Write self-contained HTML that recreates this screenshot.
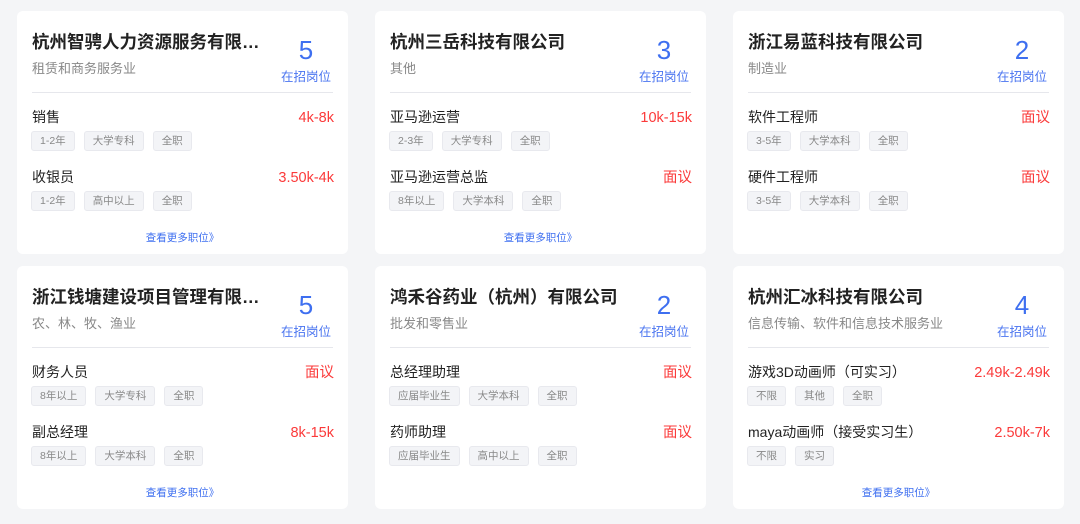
<!DOCTYPE html>
<html><head><meta charset="utf-8"><style>
*{margin:0;padding:0;box-sizing:border-box}
body{width:1080px;height:524px;background:#f4f5f7;font-family:"Liberation Sans","Noto Sans CJK SC",sans-serif;position:relative;overflow:hidden}
.c{position:absolute;width:331px;height:243px;background:#fff;border-radius:6px}
.t{position:absolute;left:15px;top:19px;width:243px;font-size:17.5px;font-weight:bold;color:#222;white-space:nowrap;overflow:hidden;text-overflow:ellipsis;line-height:24px}
.s{position:absolute;left:15px;top:49px;font-size:13px;color:#888;line-height:18px}
.n{position:absolute;right:7px;top:23px;width:70px;text-align:center;font-size:26px;color:#3e6ff0;line-height:32px}
.l{position:absolute;right:7px;top:57px;width:70px;text-align:center;font-size:12.5px;color:#4a74f0;line-height:18px}
.d{position:absolute;left:15px;right:15px;top:81px;border-top:1px solid #e6e7ec}
.j{position:absolute;left:15px;right:14px;font-size:14px;color:#222;line-height:20px}
.j b{position:absolute;right:0;top:1px;font-weight:normal;font-size:14.5px;line-height:20px;color:#fb3a3a}
.g{position:absolute;left:14px;display:flex;gap:9px}
.g span{height:20px;padding:0 8px;line-height:19px;font-size:10.5px;color:#888;background:#f3f4f7;border:1px solid #e8e9ee;border-radius:3px}
.m{position:absolute;left:0;right:0;top:220px;text-align:center;font-size:10.5px;color:#3e6ff0;line-height:14px}
</style></head><body>

<div class="c" style="left:17px;top:11px">
<div class="t">杭州智骋人力资源服务有限公司</div><div class="s">租赁和商务服务业</div>
<div class="n">5</div><div class="l">在招岗位</div><div class="d"></div>
<div class="j" style="top:96px">销售<b>4k-8k</b></div>
<div class="g" style="top:120px"><span>1-2年</span><span>大学专科</span><span>全职</span></div>
<div class="j" style="top:156px">收银员<b>3.50k-4k</b></div>
<div class="g" style="top:180px"><span>1-2年</span><span>高中以上</span><span>全职</span></div>
<div class="m">查看更多职位》</div></div>

<div class="c" style="left:375px;top:11px">
<div class="t">杭州三岳科技有限公司</div><div class="s">其他</div>
<div class="n">3</div><div class="l">在招岗位</div><div class="d"></div>
<div class="j" style="top:96px">亚马逊运营<b>10k-15k</b></div>
<div class="g" style="top:120px"><span>2-3年</span><span>大学专科</span><span>全职</span></div>
<div class="j" style="top:156px">亚马逊运营总监<b>面议</b></div>
<div class="g" style="top:180px"><span>8年以上</span><span>大学本科</span><span>全职</span></div>
<div class="m">查看更多职位》</div></div>

<div class="c" style="left:733px;top:11px">
<div class="t">浙江易蓝科技有限公司</div><div class="s">制造业</div>
<div class="n">2</div><div class="l">在招岗位</div><div class="d"></div>
<div class="j" style="top:96px">软件工程师<b>面议</b></div>
<div class="g" style="top:120px"><span>3-5年</span><span>大学本科</span><span>全职</span></div>
<div class="j" style="top:156px">硬件工程师<b>面议</b></div>
<div class="g" style="top:180px"><span>3-5年</span><span>大学本科</span><span>全职</span></div>
</div>

<div class="c" style="left:17px;top:266px">
<div class="t">浙江钱塘建设项目管理有限公司</div><div class="s">农、林、牧、渔业</div>
<div class="n">5</div><div class="l">在招岗位</div><div class="d"></div>
<div class="j" style="top:96px">财务人员<b>面议</b></div>
<div class="g" style="top:120px"><span>8年以上</span><span>大学专科</span><span>全职</span></div>
<div class="j" style="top:156px">副总经理<b>8k-15k</b></div>
<div class="g" style="top:180px"><span>8年以上</span><span>大学本科</span><span>全职</span></div>
<div class="m">查看更多职位》</div></div>

<div class="c" style="left:375px;top:266px">
<div class="t">鸿禾谷药业（杭州）有限公司</div><div class="s">批发和零售业</div>
<div class="n">2</div><div class="l">在招岗位</div><div class="d"></div>
<div class="j" style="top:96px">总经理助理<b>面议</b></div>
<div class="g" style="top:120px"><span>应届毕业生</span><span>大学本科</span><span>全职</span></div>
<div class="j" style="top:156px">药师助理<b>面议</b></div>
<div class="g" style="top:180px"><span>应届毕业生</span><span>高中以上</span><span>全职</span></div>
</div>

<div class="c" style="left:733px;top:266px">
<div class="t">杭州汇冰科技有限公司</div><div class="s">信息传输、软件和信息技术服务业</div>
<div class="n">4</div><div class="l">在招岗位</div><div class="d"></div>
<div class="j" style="top:96px">游戏3D动画师（可实习）<b>2.49k-2.49k</b></div>
<div class="g" style="top:120px"><span>不限</span><span>其他</span><span>全职</span></div>
<div class="j" style="top:156px">maya动画师（接受实习生）<b>2.50k-7k</b></div>
<div class="g" style="top:180px"><span>不限</span><span>实习</span></div>
<div class="m">查看更多职位》</div></div>

</body></html>
